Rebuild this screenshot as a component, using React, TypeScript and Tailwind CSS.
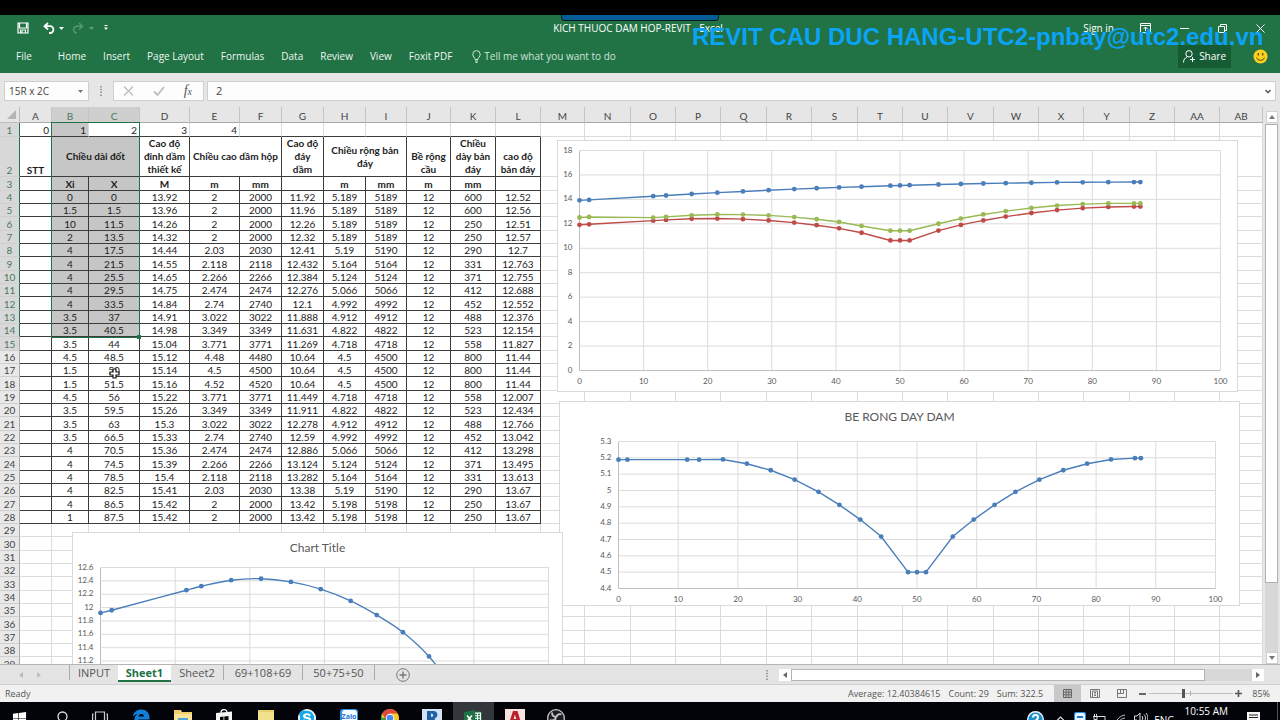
import type { ReactNode } from 'react';
import clsx from 'clsx';
import { FaWindows, FaSkype } from 'react-icons/fa';

const COLUMNS = [
    { name: 'A', width: 32 },
    { name: 'B', width: 37 },
    { name: 'C', width: 51 },
    { name: 'D', width: 50 },
    { name: 'E', width: 50 },
    { name: 'F', width: 42 },
    { name: 'G', width: 42 },
    { name: 'H', width: 42 },
    { name: 'I', width: 41 },
    { name: 'J', width: 44 },
    { name: 'K', width: 45 },
    { name: 'L', width: 45 },
    { name: 'M', width: 44 },
    { name: 'N', width: 46 },
    { name: 'O', width: 45 },
    { name: 'P', width: 45 },
    { name: 'Q', width: 46 },
    { name: 'R', width: 45 },
    { name: 'S', width: 46 },
    { name: 'T', width: 45 },
    { name: 'U', width: 45 },
    { name: 'V', width: 46 },
    { name: 'W', width: 45 },
    { name: 'X', width: 45 },
    { name: 'Y', width: 46 },
    { name: 'Z', width: 45 },
    { name: 'AA', width: 45 },
    { name: 'AB', width: 43 },
];

// Xi, X, top level, girder height, soffit level, slab width, slab thickness, slab level
const DATA = [
    [0, 0, 13.92, 2, 11.92, 5.189, 600, 12.52],
    [1.5, 1.5, 13.96, 2, 11.96, 5.189, 600, 12.56],
    [10, 11.5, 14.26, 2, 12.26, 5.189, 250, 12.51],
    [2, 13.5, 14.32, 2, 12.32, 5.189, 250, 12.57],
    [4, 17.5, 14.44, 2.03, 12.41, 5.19, 290, 12.7],
    [4, 21.5, 14.55, 2.118, 12.432, 5.164, 331, 12.763],
    [4, 25.5, 14.65, 2.266, 12.384, 5.124, 371, 12.755],
    [4, 29.5, 14.75, 2.474, 12.276, 5.066, 412, 12.688],
    [4, 33.5, 14.84, 2.74, 12.1, 4.992, 452, 12.552],
    [3.5, 37, 14.91, 3.022, 11.888, 4.912, 488, 12.376],
    [3.5, 40.5, 14.98, 3.349, 11.631, 4.822, 523, 12.154],
    [3.5, 44, 15.04, 3.771, 11.269, 4.718, 558, 11.827],
    [4.5, 48.5, 15.12, 4.48, 10.64, 4.5, 800, 11.44],
    [1.5, 50, 15.14, 4.5, 10.64, 4.5, 800, 11.44],
    [1.5, 51.5, 15.16, 4.52, 10.64, 4.5, 800, 11.44],
    [4.5, 56, 15.22, 3.771, 11.449, 4.718, 558, 12.007],
    [3.5, 59.5, 15.26, 3.349, 11.911, 4.822, 523, 12.434],
    [3.5, 63, 15.3, 3.022, 12.278, 4.912, 488, 12.766],
    [3.5, 66.5, 15.33, 2.74, 12.59, 4.992, 452, 13.042],
    [4, 70.5, 15.36, 2.474, 12.886, 5.066, 412, 13.298],
    [4, 74.5, 15.39, 2.266, 13.124, 5.124, 371, 13.495],
    [4, 78.5, 15.4, 2.118, 13.282, 5.164, 331, 13.613],
    [4, 82.5, 15.41, 2.03, 13.38, 5.19, 290, 13.67],
    [4, 86.5, 15.42, 2, 13.42, 5.198, 250, 13.67],
    [1, 87.5, 15.42, 2, 13.42, 5.198, 250, 13.67],
];

type Point = [number, number];

const column = (index: number): Point[] => DATA.map((row) => [row[1], row[index]]);

/* ---------- charts ---------- */

function linePath(points: Point[], smooth: boolean) {
    return points
        .map((p, i) => {
            if (i === 0) return `M${p[0]} ${p[1]}`;
            if (!smooth) return `L${p[0]} ${p[1]}`;
            const before = points[i - 2] ?? points[i - 1];
            const prev = points[i - 1];
            const after = points[i + 1] ?? p;
            const span = p[0] - prev[0];
            const slopeA = before === prev ? (p[1] - prev[1]) / span : (p[1] - before[1]) / (p[0] - before[0]);
            const slopeB = (after[1] - prev[1]) / (after[0] - prev[0]);
            return `C${prev[0] + span / 3} ${prev[1] + (slopeA * span) / 3} ${p[0] - span / 3} ${p[1] - (slopeB * span) / 3} ${p[0]} ${p[1]}`;
        })
        .join(' ');
}

interface ChartProps {
    className: string;
    width: number;
    height: number;
    plot: { x: number; y: number; w: number; h: number };
    xMax: number;
    yMin: number;
    yMax: number;
    yStep: number;
    title?: string;
    smooth?: boolean;
    series: { color: string; points: Point[] }[];
}

function Chart({ className, width, height, plot, xMax, yMin, yMax, yStep, title, smooth = false, series }: ChartProps) {
    const sx = (v: number) => plot.x + (v / xMax) * plot.w;
    const sy = (v: number) => plot.y + ((yMax - v) / (yMax - yMin)) * plot.h;
    const xTicks = Array.from({ length: xMax / 10 + 1 }, (_, i) => i * 10);
    const yTicks = Array.from({ length: Math.round((yMax - yMin) / yStep) + 1 }, (_, i) => Number((yMin + i * yStep).toFixed(1)));

    return (
        <svg
            className={clsx('absolute bg-white font-[Lato,sans-serif]', className)}
            width={width}
            height={height}
            viewBox={`0 0 ${width} ${height}`}
            role="img"
            aria-label={title ?? 'Elevation chart'}
        >
            <rect x="0.5" y="0.5" width={width - 1} height={height - 1} fill="#fff" stroke="#d9d9d9" />
            {title && (
                <text x={width / 2} y="20" textAnchor="middle" fontSize="12" fill="#595959">
                    {title}
                </text>
            )}
            <g stroke="#dcdcdc">
                {xTicks.map((t) => (
                    <line key={t} x1={sx(t)} x2={sx(t)} y1={plot.y} y2={plot.y + plot.h} stroke={t === 0 ? '#bfbfbf' : undefined} />
                ))}
                {yTicks.map((t) => (
                    <line key={t} x1={plot.x} x2={plot.x + plot.w} y1={sy(t)} y2={sy(t)} stroke={t === yMin ? '#bfbfbf' : undefined} />
                ))}
            </g>
            <g fontSize="8" fill="#595959">
                {xTicks.map((t) => (
                    <text key={t} x={sx(t)} y={plot.y + plot.h + 13} textAnchor="middle">
                        {t}
                    </text>
                ))}
                {yTicks.map((t) => (
                    <text key={t} x={plot.x - 7} y={sy(t) + 2} textAnchor="end">
                        {t}
                    </text>
                ))}
            </g>
            {series.map((s) => {
                const pts = s.points.map(([x, y]): Point => [sx(x), sy(y)]);
                return (
                    <g key={s.color} fill={s.color}>
                        <path d={linePath(pts, smooth)} fill="none" stroke={s.color} strokeWidth="1.4" />
                        {pts.map(([x, y]) => (
                            <circle key={x} cx={x} cy={y} r="2.4" />
                        ))}
                    </g>
                );
            })}
        </svg>
    );
}

/* ---------- title bar and ribbon ---------- */

function TitleBar() {
    return (
        <div className="relative flex h-[26px] items-center text-white">
            <div className="flex flex-1 items-center pl-[17px]">
                <button aria-label="Save" className="mr-[14px]">
                    <svg width="12" height="12" viewBox="0 0 12 12" fill="none" stroke="currentColor" strokeWidth="1.2">
                        <path d="M1 1h10v10H1zM2.500 1v5h7V1M3.500 11V8h5v3" />
                        <path d="M5 9v2" />
                    </svg>
                </button>
                <button aria-label="Undo">
                    <svg width="12" height="12" viewBox="0 0 12 12" fill="none" stroke="currentColor" strokeWidth="1.8">
                        <path d="M5 1L1.500 4.200 5 7.500M2 4.200h5a3.300 3.300 0 0 1 0 6.800H6" />
                    </svg>
                </button>
                <Caret className="ml-[4px]" />
                <button aria-label="Redo" className="ml-[8px] opacity-25">
                    <svg width="12" height="12" viewBox="0 0 12 12" fill="none" stroke="currentColor" strokeWidth="1.5">
                        <path d="M7 1l3.500 3.200L7 7.500M10 4.200H5a3.300 3.300 0 0 0 0 6.800" />
                    </svg>
                </button>
                <Caret className="ml-[5px] opacity-30" />
                <button aria-label="Customize Quick Access Toolbar" className="ml-[10px]">
                    <svg width="4" height="6" viewBox="0 0 4 6" fill="currentColor">
                        <path d="M0.500 0h3v1h-3zM0 2.500h4L2 5z" />
                    </svg>
                </button>
            </div>
            <div className="pr-[6px] text-[10px]">KICH THUOC DAM HOP-REVIT - Excel</div>
            <div className="flex flex-1 items-center justify-end pr-[15px]">
                <button className="mr-[26px] text-[10px]">Sign in</button>
                <button aria-label="Ribbon display options" className="mr-[29px]">
                    <svg width="11" height="10" viewBox="0 0 11 10" fill="none" stroke="currentColor">
                        <path d="M0.500 0.500h10v9h-10zM0.500 2.500h10M5.500 8V4M3.500 6l2-2 2 2" />
                    </svg>
                </button>
                <button aria-label="Minimize" className="mr-[29px]">
                    <svg width="9" height="10" viewBox="0 0 9 10" stroke="currentColor">
                        <path d="M0 5.500h9" />
                    </svg>
                </button>
                <button aria-label="Restore" className="mr-[29px]">
                    <svg width="9" height="9" viewBox="0 0 9 9" fill="none" stroke="currentColor">
                        <path d="M0.500 2.500h6v6h-6zM2.500 2.500v-2h6v6h-2" />
                    </svg>
                </button>
                <button aria-label="Close">
                    <svg width="9" height="9" viewBox="0 0 9 9" stroke="currentColor">
                        <path d="M0.500 0.500l8 8M8.500 0.500l-8 8" />
                    </svg>
                </button>
            </div>
            <div className="absolute top-0 left-1/2 ml-[-79px] h-[6px] w-[158px] rounded-b-sm border-x border-b border-[#0a1a20] bg-[#075b96]" />
            <div className="pointer-events-none absolute top-[8px] left-[692px] font-['Liberation_Sans',Arial,sans-serif] text-[24px] leading-[28px] font-bold whitespace-nowrap text-[#0ba3f7]">
                REVIT CAU DUC HANG-UTC2-pnbay@utc2.edu.vn
            </div>
        </div>
    );
}

function Caret({ className }: { className?: string }) {
    return (
        <svg className={className} width="5" height="3" viewBox="0 0 5 3" fill="currentColor">
            <path d="M0 0h5L2.500 3z" />
        </svg>
    );
}

function Ribbon() {
    const tabs = ['Home', 'Insert', 'Page Layout', 'Formulas', 'Data', 'Review', 'View', 'Foxit PDF'];
    return (
        <nav className="flex h-[32px] items-center pb-px pl-[16px] text-[10px] text-[#eef6f0]">
            <button className="mr-[26px]">File</button>
            <div className="flex gap-[17px]">
                {tabs.map((tab) => (
                    <button key={tab}>{tab}</button>
                ))}
            </div>
            <button className="ml-[20px] flex items-center gap-[3px] text-[#cfe4d7]">
                <svg width="9" height="13" viewBox="0 0 9 13" fill="none" stroke="currentColor">
                    <path d="M3 9.500C3 7.500 0.800 7 0.800 4.300a3.700 3.700 0 0 1 7.400 0C8.200 7 6 7.500 6 9.500zM3 11h3M3.500 12.500h2" />
                </svg>
                Tell me what you want to do
            </button>
            <button className="mr-[22px] ml-auto flex h-[23px] items-center gap-[4px] bg-[#155c34] px-[5px] text-white">
                <svg width="12" height="13" viewBox="0 0 12 13" fill="none" stroke="currentColor">
                    <circle cx="6" cy="3.800" r="3.200" />
                    <path d="M0.500 12.500c0-3 1.500-4.500 3.500-5.500M9.500 7v5M7 9.500h5" />
                </svg>
                Share
            </button>
            <button aria-label="Feedback" className="mr-[12px]">
                <svg width="15" height="15" viewBox="0 0 15 15">
                    <circle cx="7.500" cy="7.500" r="7" fill="#fbd021" />
                    <path d="M5.300 4v2.500M9.700 4v2.500" stroke="#5a4a10" strokeWidth="1.300" />
                    <path d="M3.500 8.500a4.200 4.200 0 0 0 8 0" fill="none" stroke="#5a4a10" />
                </svg>
            </button>
        </nav>
    );
}

function FormulaBar() {
    return (
        <div className="flex h-[34px] items-start bg-[#e6e6e6] px-[4px] pt-[8px]">
            <div className="flex h-[20px] w-[85px] items-center border border-[#cfcfcf] bg-[#fdfdfd] pr-[5px]">
                <input aria-label="Name box" defaultValue="15R x 2C" className="min-w-0 flex-1 bg-transparent pl-[4px] text-[10px] text-[#444]" />
                <Caret className="text-[#777]" />
            </div>
            <Grip className="mt-[5px] mr-[11px] ml-[11px]" />
            <div className="flex h-[20px] w-[91px] items-center justify-between border border-[#cfcfcf] bg-[#fdfdfd] pr-[11px] pl-[9px]">
                <button aria-label="Cancel">
                    <svg width="11" height="10" viewBox="0 0 11 10" fill="none" stroke="#bdbdbd" strokeWidth="1.400">
                        <path d="M1 0.500l9 9M10 0.500l-9 9" />
                    </svg>
                </button>
                <button aria-label="Enter">
                    <svg width="12" height="10" viewBox="0 0 12 10" fill="none" stroke="#bdbdbd" strokeWidth="1.800">
                        <path d="M1 5.500l3.500 3.500L11 1" />
                    </svg>
                </button>
                <button aria-label="Insert function" className="font-['Liberation_Serif',serif] text-[14px] leading-[14px] text-[#555] italic">
                    f<span className="text-[10px]">x</span>
                </button>
            </div>
            <div className="ml-[3px] flex h-[20px] flex-1 items-center border border-[#cfcfcf] bg-[#fdfdfd] pr-[4px]">
                <input aria-label="Formula" defaultValue="2" className="min-w-0 flex-1 bg-transparent pl-[8px] text-[11px] text-[#444]" />
                <svg width="6" height="5" viewBox="0 0 6 5" fill="none" stroke="#666" strokeWidth="1.600">
                    <path d="M0.500 1L3 3.500 5.500 1" />
                </svg>
            </div>
        </div>
    );
}

function Grip({ className }: { className?: string }) {
    return (
        <svg className={className} width="2" height="10" viewBox="0 0 2 10" fill="#a0a0a0">
            <path d="M0 0h2v1.500H0zM0 2.800h2v1.500H0zM0 5.600h2v1.500H0zM0 8.400h2V10H0z" />
        </svg>
    );
}

/* ---------- worksheet ---------- */

const rowHeight = (n: number) => (n === 1 ? 'h-[14px]' : n === 2 ? 'h-[40px]' : n % 3 === 0 ? 'h-[14px]' : 'h-[13px]');

function Cell({ children, className, span, dark, selected }: { children?: ReactNode; className?: string; span?: number; dark?: boolean; selected?: boolean }) {
    return (
        <td
            colSpan={span}
            className={clsx(
                'overflow-hidden border-r border-b p-0',
                dark ? 'border-[#3c3c3c]' : 'border-[#dcdcdc]',
                selected && 'bg-[#c6c6c6]',
                className,
            )}
        >
            {children}
        </td>
    );
}

function Blanks({ count }: { count: number }) {
    return (
        <>
            {Array.from({ length: count }, (_, i) => (
                <Cell key={i} />
            ))}
        </>
    );
}

function Row({ n, children }: { n: number; children: ReactNode }) {
    return (
        <tr className={rowHeight(n)}>
            <th
                scope="row"
                className={clsx(
                    'border-r border-b border-b-[#cfcfcf] p-0 align-bottom font-normal',
                    n <= 14 ? 'border-r-[#217346]' : 'border-r-[#a9a9a9]',
                    n <= 15 ? 'bg-[#d8d8d8] text-[#4b7a60]' : 'bg-[#e8e8e8] text-[#444]',
                )}
            >
                {n}
            </th>
            {children}
        </tr>
    );
}

function Grid() {
    return (
        <table className="w-full table-fixed border-separate border-spacing-0 bg-white text-center font-[Lato,'Open_Sans',sans-serif] text-[10px] leading-[12px] text-[#1c1c1c]">
            <colgroup>
                <col className="w-[20px]" />
                {COLUMNS.map((c) => (
                    <col key={c.name} style={{ width: c.width }} />
                ))}
            </colgroup>
            <thead>
                <tr className="h-[16px] bg-[#e6e6e6] text-[#444]">
                    <th className="border-r border-b border-[#bdbdbd] p-0" aria-label="Select all">
                        <svg className="mr-[3px] ml-auto" width="9" height="9" viewBox="0 0 9 9" fill="#b4b4b4">
                            <path d="M9 0v9H0z" />
                        </svg>
                    </th>
                    {COLUMNS.map((c) => (
                        <th
                            key={c.name}
                            scope="col"
                            className={clsx(
                                'border-r border-b border-r-[#c4c4c4] border-b-[#a9a9a9] p-0 align-bottom font-normal',
                                (c.name === 'B' || c.name === 'C') && 'bg-[#cfcfcf] text-[#4b7a60]',
                            )}
                        >
                            {c.name}
                        </th>
                    ))}
                </tr>
            </thead>
            <tbody>
                <Row n={1}>
                    {['0', '1', '2', '3', '4', '', '', '', '', '', '', ''].map((v, i) => (
                        <Cell key={i} selected={i === 1} className="border-b-[#3c3c3c] pr-[2px] text-right">
                            {v}
                        </Cell>
                    ))}
                    <Blanks count={16} />
                </Row>
                <Row n={2}>
                    <Cell dark className="align-bottom font-bold">STT</Cell>
                    <Cell dark selected span={2} className="leading-[13px] font-bold">Chiều dài đốt</Cell>
                    <Cell dark className="leading-[13px] font-bold">Cao độ<br />đỉnh dầm<br />thiết kế</Cell>
                    <Cell dark span={2} className="leading-[13px] font-bold whitespace-nowrap">Chiều cao dầm hộp</Cell>
                    <Cell dark className="leading-[13px] font-bold">Cao độ<br />đáy<br />dầm</Cell>
                    <Cell dark span={2} className="leading-[13px] font-bold">Chiều rộng bản<br />đáy</Cell>
                    <Cell dark className="align-bottom leading-[13px] font-bold">Bề rộng<br />cầu</Cell>
                    <Cell dark className="leading-[13px] font-bold">Chiều<br />dày bản<br />đáy</Cell>
                    <Cell dark className="align-bottom leading-[13px] font-bold">cao độ<br />bản đáy</Cell>
                    <Blanks count={16} />
                </Row>
                <Row n={3}>
                    {['', 'Xi', 'X', 'M', 'm', 'mm', '', 'm', 'mm', 'm', 'mm', ''].map((v, i) => (
                        <Cell key={i} dark selected={i === 1 || i === 2} className="font-bold">
                            {v}
                        </Cell>
                    ))}
                    <Blanks count={16} />
                </Row>
                {DATA.map(([xi, x, top, height, soffit, width, thickness, slab], r) => (
                    <Row key={r} n={r + 4}>
                        {['', xi, x, top, height, Math.round(height * 1000), soffit, width, Math.round(width * 1000), 12, thickness, slab].map((v, i) => (
                            <Cell key={i} dark selected={r <= 10 && (i === 1 || i === 2)}>
                                {v}
                            </Cell>
                        ))}
                        <Blanks count={16} />
                    </Row>
                ))}
                {Array.from({ length: 11 }, (_, i) => (
                    <Row key={i} n={i + 29}>
                        <Blanks count={28} />
                    </Row>
                ))}
            </tbody>
        </table>
    );
}

function Sheet() {
    return (
        <main className="flex min-h-0 flex-1 border-b border-[#b5b5b5] bg-[#e6e6e6]">
            <div className="relative min-w-0 flex-1 overflow-hidden">
                <Grid />
                {/* selection frame */}
                <div className="pointer-events-none absolute top-[15px] left-[51px] h-[216px] w-[89px] border border-[#217346]">
                    <span className="absolute right-[-2px] bottom-[-2px] size-[4px] bg-[#217346]" />
                </div>
                <Chart
                    className="top-[33px] left-[557px]"
                    width={681}
                    height={252}
                    plot={{ x: 22.5, y: 10.5, w: 641, h: 220 }}
                    xMax={100}
                    yMin={0}
                    yMax={18}
                    yStep={2}
                    series={[
                        { color: '#4a7ebb', points: column(2) },
                        { color: '#be4b48', points: column(4) },
                        { color: '#98b954', points: column(7) },
                    ]}
                />
                <Chart
                    className="top-[294px] left-[559px]"
                    width={681}
                    height={205}
                    plot={{ x: 59.5, y: 40.5, w: 597, h: 147 }}
                    xMax={100}
                    yMin={4.4}
                    yMax={5.3}
                    yStep={0.1}
                    title="BE RONG DAY DAM"
                    series={[{ color: '#4a7ebb', points: column(5) }]}
                />
                <Chart
                    className="top-[425px] left-[72px]"
                    width={491}
                    height={220}
                    plot={{ x: 28.5, y: 35.5, w: 448, h: 147 }}
                    xMax={60}
                    yMin={10.4}
                    yMax={12.6}
                    yStep={0.2}
                    title="Chart Title"
                    smooth
                    series={[{ color: '#4a7ebb', points: column(4).slice(0, 15) }]}
                />
                {/* cell cursor */}
                <svg className="absolute top-[261px] left-[109px]" width="11" height="11" viewBox="0 0 11 11">
                    <path d="M4 1h3v3h3v3H7v3H4V7H1V4h3z" fill="#fff" stroke="#111" strokeWidth="1.200" />
                </svg>
            </div>
            <div className="flex w-[17px] flex-col items-center pt-[4px]">
                <button aria-label="Scroll up" className="flex h-[12px] w-[12px] items-center justify-center border border-[#cfcfcf] bg-white">
                    <svg width="6" height="4" viewBox="0 0 6 4" fill="#777">
                        <path d="M0 4h6L3 0z" />
                    </svg>
                </button>
                <div className="mt-[1px] w-[13px] flex-1 bg-[#d8d8d8]">
                    <div className="h-[87%] border border-[#b0b0b0] bg-white" />
                </div>
                <button aria-label="Scroll down" className="flex h-[12px] w-[12px] items-center justify-center border border-[#cfcfcf] bg-white">
                    <svg width="6" height="4" viewBox="0 0 6 4" fill="#777">
                        <path d="M0 0h6L3 4z" />
                    </svg>
                </button>
            </div>
        </main>
    );
}

/* ---------- sheet tabs and status bar ---------- */

function SheetTabs() {
    return (
        <div className="flex h-[19px] bg-[#e4e4e4] text-[11px] leading-[14px] text-[#555]">
            <div className="flex w-[69px] items-center gap-[14px] pl-[19px]">
                <button aria-label="Previous sheet">
                    <svg width="4" height="6" viewBox="0 0 4 6" fill="#bdbdbd">
                        <path d="M4 0v6L0 3z" />
                    </svg>
                </button>
                <button aria-label="Next sheet">
                    <svg width="4" height="6" viewBox="0 0 4 6" fill="#bdbdbd">
                        <path d="M0 0v6l4-3z" />
                    </svg>
                </button>
            </div>
            <button className="h-[15px] w-[49px] border-l border-[#ababab]">INPUT</button>
            <button className="h-[17px] w-[53px] border-b-2 border-[#217346] bg-white font-bold text-[#217346]">Sheet1</button>
            <button className="h-[15px] w-[53px] border-r border-[#ababab]">Sheet2</button>
            <button className="h-[15px] w-[79px] border-r border-[#ababab]">69+108+69</button>
            <button className="h-[15px] w-[72px] border-r border-[#ababab]">50+75+50</button>
            <button aria-label="New sheet" className="ml-[21px]">
                <svg width="14" height="14" viewBox="0 0 14 14" fill="none" stroke="#777">
                    <circle cx="7" cy="7" r="6.300" />
                    <path d="M7 3.500v7M3.500 7h7" strokeWidth="1.400" />
                </svg>
            </button>
            <div className="ml-auto flex items-center pr-[16px]">
                <Grip className="mr-[11px]" />
                <button aria-label="Scroll left" className="flex h-[12px] w-[12px] items-center justify-center bg-white">
                    <svg width="4" height="6" viewBox="0 0 4 6" fill="#666">
                        <path d="M4 0v6L0 3z" />
                    </svg>
                </button>
                <div className="flex h-[12px] w-[461px] bg-[#d8d8d8]">
                    <div className="w-[414px] border border-[#b5b5b5] bg-white" />
                </div>
                <button aria-label="Scroll right" className="flex h-[12px] w-[12px] items-center justify-center bg-white">
                    <svg width="4" height="6" viewBox="0 0 4 6" fill="#666">
                        <path d="M0 0v6l4-3z" />
                    </svg>
                </button>
            </div>
        </div>
    );
}

function StatusBar() {
    return (
        <footer className="flex h-[18px] items-center border-t border-[#cfcfcf] bg-[#f1f1f1] pr-[10px] pl-[5px] text-[9px] text-[#555]">
            <span>Ready</span>
            <div className="ml-auto flex gap-[8px]">
                <span>Average: 12.40384615</span>
                <span>Count: 29</span>
                <span>Sum: 322.5</span>
            </div>
            <button aria-label="Normal view" className="ml-[11px] flex h-[17px] w-[27px] items-center justify-center bg-[#c8c8c8]">
                <svg width="9" height="9" viewBox="0 0 9 9" fill="none" stroke="#666">
                    <path d="M0.500 0.500h8v8h-8zM3.200 0v9M5.800 0v9M0 3.200h9M0 5.800h9" />
                </svg>
            </button>
            <button aria-label="Page layout view" className="flex w-[27px] justify-center">
                <svg width="10" height="9" viewBox="0 0 10 9" fill="none" stroke="#777">
                    <path d="M0.500 0.500h9v8h-9zM2.500 2h5v6.500M2.500 2v6.500M4 3.500h2M4 5h2M4 6.500h2" />
                </svg>
            </button>
            <button aria-label="Page break preview" className="flex w-[27px] justify-center">
                <svg width="10" height="9" viewBox="0 0 10 9" fill="none" stroke="#777">
                    <path d="M0.500 0.500h9v8h-9zM3.500 0.500v4h3v-4M0.500 4.500h3" />
                </svg>
            </button>
            <button aria-label="Zoom out" className="ml-[4px] h-[2px] w-[7px] bg-[#666]" />
            <div className="relative ml-[3px] flex w-[84px] items-center">
                <span className="absolute left-[41px] h-[5px] w-px bg-[#b0b0b0]" />
                <input
                    type="range"
                    aria-label="Zoom"
                    defaultValue={40}
                    className="h-px w-full appearance-none bg-[#bdbdbd] [&::-webkit-slider-thumb]:h-[9px] [&::-webkit-slider-thumb]:w-[3px] [&::-webkit-slider-thumb]:appearance-none [&::-webkit-slider-thumb]:bg-[#555]"
                />
            </div>
            <button aria-label="Zoom in" className="ml-[2px]">
                <svg width="7" height="7" viewBox="0 0 7 7" stroke="#555" strokeWidth="1.600">
                    <path d="M3.500 0v7M0 3.500h7" />
                </svg>
            </button>
            <span className="ml-[10px]">85%</span>
        </footer>
    );
}

/* ---------- taskbar ---------- */

const APPS: { label: string; active?: boolean; icon: ReactNode }[] = [
    {
        label: 'Task view',
        icon: (
            <svg width="16" height="16" viewBox="0 0 16 16" fill="none" stroke="#ccc" strokeWidth="1.200">
                <path d="M3.500 3h9v12h-9zM1.500 5H0.600v9h0.900M14.500 5h0.900v9h-0.900" />
            </svg>
        ),
    },
    {
        label: 'Edge',
        icon: (
            <svg width="18" height="18" viewBox="0 0 18 18">
                <path d="M0.500 8C1.500 3 5 0.500 9.300 0.500c5 0 8.200 3.500 8.200 8v2H6.300c0.300 3.500 5 5 9.700 2.500v3.500C9 19.500 2 16.500 2.500 10 2.700 7.500 4 5.800 6 5 3.500 5.200 1.500 6.500 0.500 8zM6.500 7.500h5.500c0-3.500-5-3.500-5.500 0z" fill="#0f7fd9" />
            </svg>
        ),
    },
    {
        label: 'File Explorer',
        icon: (
            <svg width="18" height="16" viewBox="0 0 18 16">
                <path d="M0 1h7l1 2h10v12H0z" fill="#f0cf6a" />
                <path d="M0 5h18v10H0z" fill="#fbe499" />
                <path d="M4 9h10v6H4z" fill="#4ea3d8" />
            </svg>
        ),
    },
    {
        label: 'Store',
        icon: (
            <svg width="18" height="18" viewBox="0 0 18 18">
                <path d="M1 4l16-1.500V18H1z" fill="#f5f5f5" />
                <path d="M6 5V3.500C6 0 11.500-0.500 12 3v1.500" fill="none" stroke="#f5f5f5" strokeWidth="1.300" />
                <path d="M5 8l3.500-0.500V11H5zM9.300 7.400L13.500 7v4H9.300zM5 12h3.500v3.500H5zM9.300 12h4.200v4H9.300z" fill="#05050a" />
            </svg>
        ),
    },
    {
        label: 'Sticky Notes',
        icon: (
            <svg width="16" height="16" viewBox="0 0 16 16">
                <path d="M0 1h16v15H0z" fill="#f3e08c" />
                <path d="M0 1h16v2H0z" fill="#e8d06c" />
            </svg>
        ),
    },
    { label: 'Skype', icon: <FaSkype size={18} color="#12a8ea" className="rounded-full bg-white" /> },
    {
        label: 'Zalo',
        icon: (
            <svg width="18" height="18" viewBox="0 0 18 18">
                <rect width="18" height="18" rx="3" fill="#2b8fe6" />
                <rect x="2" y="1" width="15" height="13" rx="3" fill="#f4faff" />
                <text x="9" y="10" fontSize="7" fontWeight="700" textAnchor="middle" fill="#1d74d8">
                    Zalo
                </text>
            </svg>
        ),
    },
    {
        label: 'Chrome',
        icon: (
            <svg width="18" height="18" viewBox="0 0 18 18">
                <circle cx="9" cy="9" r="9" fill="#f6c927" />
                <path d="M9 9H1.200V4.500A9 9 0 0 0 9 18l4-7z" fill="#2ba24c" />
                <path d="M1.200 4.500A9 9 0 0 1 16.800 4.500H9L5 11z" fill="#dd4b3e" />
                <circle cx="9" cy="9" r="4.200" fill="#fff" />
                <circle cx="9" cy="9" r="3.300" fill="#4a8af4" />
            </svg>
        ),
    },
    {
        label: 'Revit',
        icon: (
            <svg width="20" height="18" viewBox="0 0 20 18">
                <path d="M0 0h20v18H0z" fill="#d3e2f3" />
                <path d="M5 2h6.500c5 0 5 6.500 1 7.500L16 17h-4.500L9 10.500V17H5zM9 4.500v3.500c3 0 3-3.500 0-3.500z" fill="#1f5fa8" />
            </svg>
        ),
    },
    {
        label: 'Excel',
        active: true,
        icon: (
            <svg width="18" height="18" viewBox="0 0 18 18">
                <path d="M9 3h8.500v12H9z" fill="#fff" stroke="#1f7145" />
                <path d="M11 5.500h2M14 5.500h2M11 8h2M14 8h2M11 10.500h2M14 10.500h2" stroke="#1f7145" strokeWidth="1.400" />
                <path d="M0 3l11-2v17L0 16z" fill="#1f7145" />
                <path d="M3 6.500l5 6M8 6.500l-5 6" stroke="#fff" strokeWidth="1.600" />
            </svg>
        ),
    },
    {
        label: 'AutoCAD',
        icon: (
            <svg width="20" height="18" viewBox="0 0 20 18">
                <path d="M0 0h20v18H0z" fill="#f9e2df" />
                <path d="M8 2h4.500L17 17h-4l-1-4H8l-1.500 4H3zM9.800 5.500L8.700 10h2.600z" fill="#b8232b" />
            </svg>
        ),
    },
    {
        label: 'OBS',
        icon: (
            <svg width="18" height="18" viewBox="0 0 18 18">
                <circle cx="9" cy="9" r="8.300" fill="#1e1e22" stroke="#c8c8c8" strokeWidth="1.300" />
                <path d="M5 3.500c0 3 2 4.500 4.500 4.500M14.500 5.500c-2-1-4.500 0-5 2.500M3 11c2.500 1 5 0 6-2" fill="none" stroke="#c8c8c8" strokeWidth="1.800" />
            </svg>
        ),
    },
];

function Taskbar() {
    return (
        <div className="flex h-[18px] items-start overflow-hidden bg-[#03040a] text-white">
            <button aria-label="Start" className="flex w-[38px] justify-center pt-[9px]">
                <FaWindows size={15} />
            </button>
            <button aria-label="Search" className="flex w-[41px] justify-center pt-[9px] pl-[6px]">
                <svg width="12" height="16" viewBox="0 0 12 16" fill="none" stroke="#ddd" strokeWidth="1.300">
                    <circle cx="6.500" cy="5.500" r="4.500" />
                    <path d="M3.500 9L0.500 14" />
                </svg>
            </button>
            <div className="flex w-[498px]">
                {APPS.map((app) => (
                    <button key={app.label} aria-label={app.label} className={clsx('flex h-[30px] flex-1 justify-center pt-[7px]', app.active && 'bg-[#33363b]')}>
                        {app.icon}
                    </button>
                ))}
            </div>
            <div className="ml-auto flex items-start pt-[9px] text-[10px] leading-[15px]">
                <button aria-label="Help" className="mr-[12px]">
                    <svg width="17" height="17" viewBox="0 0 17 17">
                        <circle cx="8.500" cy="8.500" r="7.800" fill="#1b8fc9" stroke="#e8f4fb" strokeWidth="1.400" />
                        <path d="M6 6.500c0-3.300 5-3.300 5 0 0 2-2.500 2-2.500 4" fill="none" stroke="#fff" strokeWidth="2" />
                    </svg>
                </button>
                <button aria-label="Show hidden icons" className="mt-[5px] mr-[9px]">
                    <svg width="9" height="6" viewBox="0 0 9 6" fill="none" stroke="#ddd" strokeWidth="1.200">
                        <path d="M0.500 5l4-4 4 4" />
                    </svg>
                </button>
                <svg className="mt-[1px] mr-[7px]" width="12" height="12" viewBox="0 0 12 12">
                    <rect width="12" height="12" rx="2" fill="#2b8fe6" />
                    <rect x="1" y="1" width="10" height="8" rx="2" fill="#e6f2fd" />
                    <path d="M3 5h6" stroke="#1d74d8" strokeWidth="2" />
                </svg>
                <svg className="mt-[3px] mr-[9px]" width="13" height="9" viewBox="0 0 13 9" fill="none" stroke="#ddd">
                    <path d="M4 2.500h8v6H4M0 2.500h5M1.500 0v2.500M3.500 0v2.500M1 2.500v3h3v-3" />
                </svg>
                <svg className="mt-[3px] mr-[8px]" width="11" height="12" viewBox="0 0 11 12" fill="none" stroke="#bbb">
                    <path d="M0.500 10A11 11 0 0 1 10 1M3 11a8 8 0 0 1 7-7M6 11.500a5 5 0 0 1 4-4" />
                </svg>
                <svg className="mt-[1px] mr-[6px]" width="14" height="12" viewBox="0 0 14 12" fill="none" stroke="#ddd">
                    <path d="M0.500 4h2.500l3-3v10L3 8H0.500zM8 4c1 1 1 3 0 4M10 2.500c2 2 2 5 0 7M12 1c2.500 3 2.500 7 0 10" />
                </svg>
                <button className="mt-[2px] mr-[10px]">ENG</button>
                <time className="mt-[-7px] mr-[19px]">10:55 AM</time>
                <button aria-label="Notifications" className="mr-[16px] pt-[1px]">
                    <svg width="14" height="14" viewBox="0 0 14 14">
                        <path d="M0 0h13v10H8l-3 3v-3H0z" fill="#f5f5f5" />
                        <path d="M2 3h9M2 5.500h9" stroke="#222" />
                    </svg>
                </button>
                <span className="mt-[-9px] mr-[2px] h-[18px] w-px bg-[#555]" />
            </div>
        </div>
    );
}

export default function App() {
    return (
        <div className="flex h-screen flex-col overflow-hidden bg-black pt-[15px] font-['Open_Sans','Noto_Sans',sans-serif]">
            <header className="bg-[#217346]">
                <TitleBar />
                <Ribbon />
            </header>
            <FormulaBar />
            <Sheet />
            <SheetTabs />
            <StatusBar />
            <Taskbar />
        </div>
    );
}
